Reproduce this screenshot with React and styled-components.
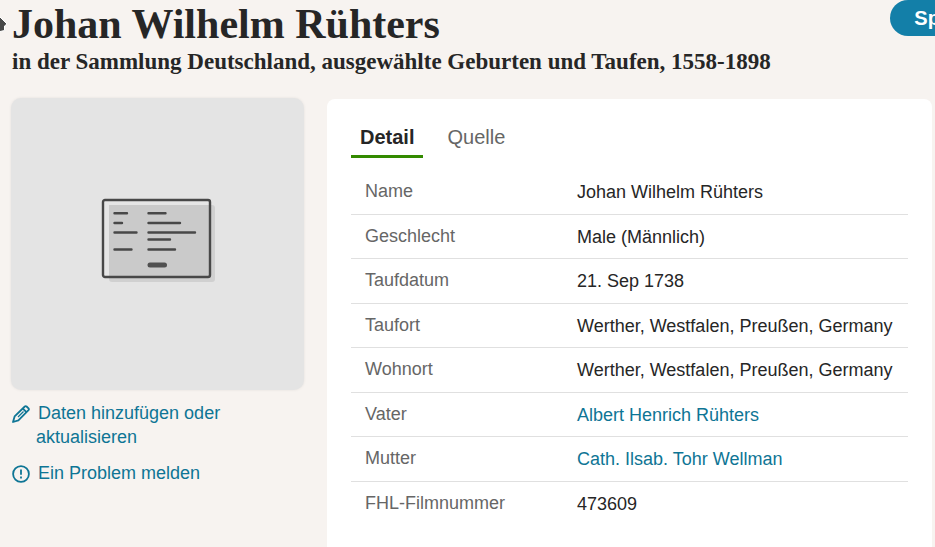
import React from 'react'
import styled, { createGlobalStyle } from 'styled-components'

const GlobalStyle = createGlobalStyle`
  * {
    box-sizing: border-box;
  }
  body {
    margin: 0;
    background: #f7f3f0;
    color: #262626;
    font-family: "Liberation Sans", Arial, sans-serif;
    font-size: 18px;
    line-height: 24px;
  }
`;

const Page = styled.div`
  position: relative;
  min-height: 100vh;
  display: flex;
  flex-direction: column;
  overflow-x: clip;
`;

const Pointer = styled.svg`
  position: absolute;
  left: 0;
  top: 14px;
  width: 8px;
  height: 20px;
`;

const Header = styled.header`
  display: flex;
  justify-content: space-between;
  align-items: flex-start;
  height: 98px;
  padding-left: 12px;
`;

const Title = styled.h1`
  margin: 0;
  font-family: "Liberation Serif", "Times New Roman", serif;
  font-size: 42px;
  line-height: 48px;
  font-weight: bold;
  white-space: nowrap;
`;

const Subtitle = styled.h2`
  margin: 0;
  font-family: "Liberation Serif", "Times New Roman", serif;
  font-size: 23px;
  line-height: 28px;
  font-weight: bold;
  white-space: nowrap;
`;

const SaveButton = styled.button`
  flex: none;
  height: 36px;
  margin-right: -100px;
  padding: 0 24px;
  border: none;
  border-radius: 18px;
  background: #137fa8;
  color: white;
  font-family: inherit;
  font-size: 20px;
  font-weight: bold;
`;

const Main = styled.main`
  flex: 1;
  display: flex;
  align-items: stretch;
  gap: 23px;
  padding: 0 3px 0 11px;
`;

const Sidebar = styled.aside`
  flex: none;
  width: 293px;
`;

const Preview = styled.div`
  display: flex;
  justify-content: center;
  align-items: center;
  height: 292px;
  border-radius: 10px;
  background: #e4e4e4;
  box-shadow: 0 0 3px rgba(0, 0, 0, 0.08);
`;

const ActionList = styled.ul`
  display: flex;
  flex-direction: column;
  gap: 12px;
  margin: 0;
  padding: 11px 0 0 1px;
  list-style: none;
`;

const Action = styled.a`
  display: block;
  max-width: 240px;
  padding-left: 24px;
  color: #0e7595;
  text-decoration: none;
  text-indent: -24px;
  svg {
    margin-right: 8px;
    vertical-align: -4px;
  }
`;

const Panel = styled.section`
  flex: 1;
  margin-top: 1px;
  padding: 15px 24px 0 24px;
  border-radius: 8px 8px 0 0;
  background: white;
`;

const Tabs = styled.div`
  display: flex;
  gap: 15px;
`;

const Tab = styled.button`
  height: 44px;
  padding: 6px 9px 0 9px;
  border: none;
  border-bottom: 3px solid ${({ $active }) => ($active ? '#338a00' : 'transparent')};
  background: none;
  color: ${({ $active }) => ($active ? '#262626' : '#666666')};
  font-family: inherit;
  font-size: 20px;
  font-weight: ${({ $active }) => ($active ? 'bold' : 'normal')};
`;

const Facts = styled.table`
  width: 100%;
  margin-top: 12px;
  border-collapse: separate;
  border-spacing: 0;
`;

const Row = styled.tr`
  height: 44px;
  &:nth-child(odd) {
    height: 45px;
  }
  &:last-child > * {
    border-bottom: none;
  }
`;

const Label = styled.th`
  width: 212px;
  padding: 0 0 2px 14px;
  border-bottom: 1px solid #e0e0e0;
  color: #666666;
  font-weight: normal;
  text-align: left;
`;

const Value = styled.td`
  padding: 0 0 0 14px;
  border-bottom: 1px solid #e0e0e0;
`;

const PersonLink = styled.a`
  color: #0e7595;
  text-decoration: none;
`;

const facts = [
  { label: 'Name', value: 'Johan Wilhelm Rühters' },
  { label: 'Geschlecht', value: 'Male (Männlich)' },
  { label: 'Taufdatum', value: '21. Sep 1738' },
  { label: 'Taufort', value: 'Werther, Westfalen, Preußen, Germany' },
  { label: 'Wohnort', value: 'Werther, Westfalen, Preußen, Germany' },
  { label: 'Vater', value: 'Albert Henrich Rühters', link: true },
  { label: 'Mutter', value: 'Cath. Ilsab. Tohr Wellman', link: true },
  { label: 'FHL-Filmnummer', value: '473609' },
]

const RecordIcon = () => (
  <svg width="114" height="92" viewBox="0 0 114 92" fill="none" aria-hidden="true">
    <rect x="8" y="7" width="106" height="77" rx="3" fill="#d0d0d0" />
    <rect x="2" y="2" width="107" height="77" rx="2" fill="#e6e6e6" />
    <path d="M8 7h101v72H8z" fill="#cacaca" />
    <rect x="2" y="2" width="107" height="77" rx="2" stroke="#484848" strokeWidth="2.4" />
    <path
      d="M13.500 15.300h12.500M13.500 25h7.500M13.500 34.500h22M13.500 51.500h17M47.500 15.300h17M47.500 25h31.500M47.500 34.500h46.500M47.500 41.500h21.500M47.500 51.500h26.500"
      stroke="#484848"
      strokeWidth="2.4"
      strokeLinecap="round"
    />
    <path d="M49 67h14.500" stroke="#505050" strokeWidth="5" strokeLinecap="round" />
  </svg>
)

const PencilIcon = () => (
  <svg width="18" height="18" viewBox="0 0 18 18" fill="none" stroke="#0e7595" strokeWidth="1.8" strokeLinejoin="round" aria-hidden="true">
    <path d="M1 17l1.600-5.600L12.800 1.500q.9-.8 1.800 0l1.900 1.900q.8.9 0 1.800L6.400 15.300z" />
    <path d="M10.900 3.600l3.500 3.500" />
    <path d="M6 12l5.500-5.500" strokeWidth="1.200" />
  </svg>
)

const AlertIcon = () => (
  <svg width="18" height="18" viewBox="0 0 18 18" fill="none" stroke="#0e7595" strokeWidth="1.8" aria-hidden="true">
    <circle cx="9" cy="9" r="7.900" />
    <path d="M9 4.600v5.200M9 11.400v2" />
  </svg>
)

const App = () => {
  return (
    <Page>
      <GlobalStyle />
      <Header>
        <div>
          <Title>Johan Wilhelm Rühters</Title>
          <Subtitle>in der Sammlung Deutschland, ausgewählte Geburten und Taufen, 1558-1898</Subtitle>
        </div>
        <SaveButton>Speichern</SaveButton>
      </Header>
      <Main>
        <Sidebar>
          <Preview><RecordIcon /></Preview>
          <ActionList>
            <li>
              <Action href="#edit"><PencilIcon />Daten hinzufügen oder aktualisieren</Action>
            </li>
            <li>
              <Action href="#report"><AlertIcon />Ein Problem melden</Action>
            </li>
          </ActionList>
        </Sidebar>
        <Panel>
          <Tabs role="tablist">
            <Tab role="tab" aria-selected="true" $active>Detail</Tab>
            <Tab role="tab" aria-selected="false">Quelle</Tab>
          </Tabs>
          <Facts>
            <tbody>
              {facts.map(({ label, value, link }) => (
                <Row key={label}>
                  <Label scope="row">{label}</Label>
                  <Value>{link ? <PersonLink href="#person">{value}</PersonLink> : value}</Value>
                </Row>
              ))}
            </tbody>
          </Facts>
        </Panel>
      </Main>
      <Pointer viewBox="0 0 8 20" aria-hidden="true">
        <path d="M-2 1L7 10L4.500 12V16.500L-2 18z" fill="#484848" stroke="white" />
      </Pointer>
    </Page>
  )
}

export default App
